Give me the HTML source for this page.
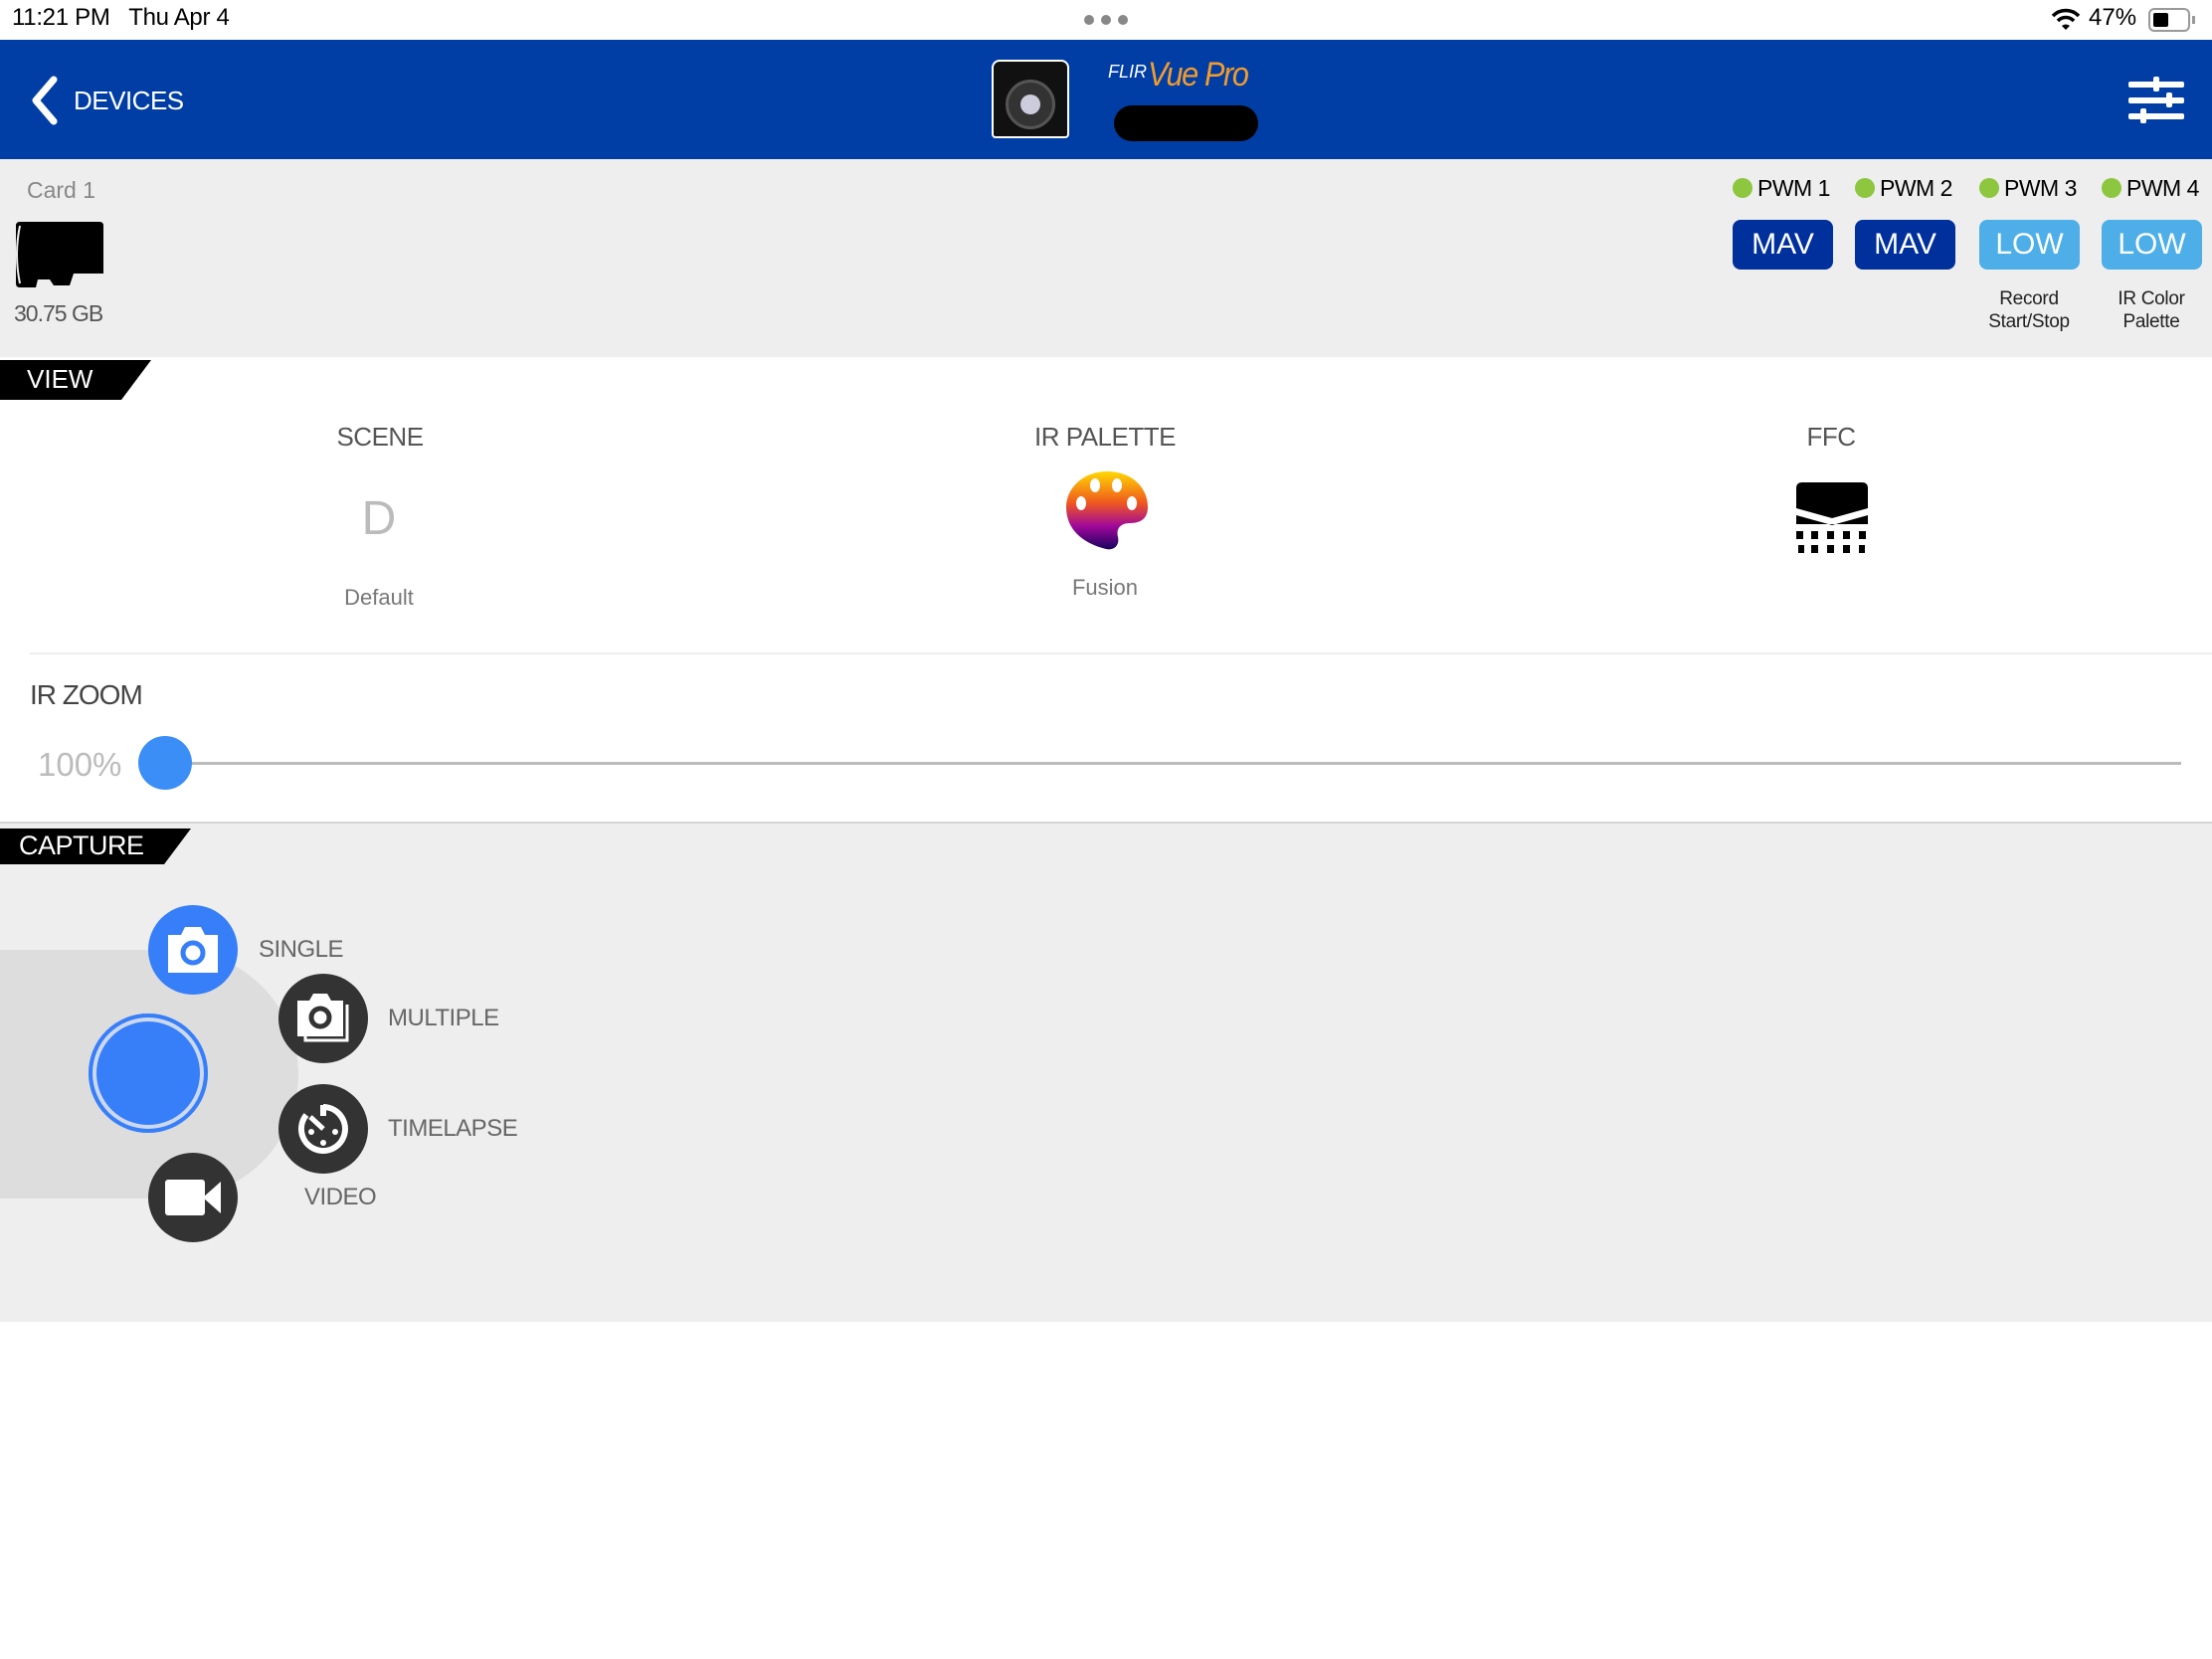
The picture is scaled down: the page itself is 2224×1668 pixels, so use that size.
<!DOCTYPE html>
<html><head><meta charset="utf-8"><style>
*{margin:0;padding:0;box-sizing:border-box}
body{width:2224px;height:1668px;background:#fff;font-family:"Liberation Sans",sans-serif;position:relative;overflow:hidden}
.a{position:absolute}
.c{transform:translateX(-50%);white-space:nowrap}
.btn{position:absolute;top:221px;width:101px;height:50px;border-radius:8px;color:#fff;font-size:30px;text-align:center;line-height:50px}
.pwm{position:absolute;top:176px;font-size:23px;color:#000;letter-spacing:-0.5px}
.pwm i{display:inline-block;width:20px;height:20px;border-radius:50%;background:#8dc63f;margin-right:5px;vertical-align:-2px}
.circ{position:absolute;width:90px;height:90px;border-radius:50%;background:#333;display:flex;align-items:center;justify-content:center}
.lbl{position:absolute;font-size:24px;color:#666;transform:translateY(-50%);letter-spacing:-0.5px}
</style></head><body>
<div class="a" style="left:12px;top:4px;font-size:24px;color:#000;letter-spacing:-0.3px">11:21 PM&nbsp;&nbsp; Thu Apr 4</div>
<div class="a" style="left:1090px;top:15px;width:44px;height:12px;display:flex;justify-content:space-between"><i style="width:10px;height:10px;border-radius:50%;background:#888"></i><i style="width:10px;height:10px;border-radius:50%;background:#888"></i><i style="width:10px;height:10px;border-radius:50%;background:#888"></i></div>
<svg class="a" style="left:2062px;top:7px" width="30" height="24" viewBox="0 0 30 24"><path d="M2 9 A18 18 0 0 1 28 9" stroke="#000" stroke-width="3.5" fill="none"/><path d="M7 14 A11 11 0 0 1 23 14" stroke="#000" stroke-width="3.5" fill="none"/><path d="M11 19 L15 23 L19 19 A6 6 0 0 0 11 19Z" fill="#000"/></svg>
<div class="a" style="left:2100px;top:4px;font-size:24px">47%</div>
<div class="a" style="left:2160px;top:8px;width:42px;height:24px;border:2px solid #999;border-radius:6px"><div style="margin:3px;width:15px;height:14px;background:#000;border-radius:2px"></div></div>
<div class="a" style="left:2204px;top:16px;width:3px;height:8px;background:#999"></div>
<div class="a" style="left:0;top:40px;width:2224px;height:120px;background:#003ea5"></div>
<svg class="a" style="left:28px;top:76px" width="32" height="50" viewBox="0 0 32 50"><path d="M26 4 L8 25 L26 46" stroke="#fff" stroke-width="7" fill="none" stroke-linejoin="round" stroke-linecap="round"/></svg>
<div class="a" style="left:74px;top:86px;font-size:26px;color:#fff;letter-spacing:-0.5px">DEVICES</div>
<div class="a" style="left:997px;top:60px;width:78px;height:79px;background:#111;border:2px solid #fff;border-radius:8px 8px 4px 4px"></div>
<div class="a" style="left:1011px;top:80px;width:50px;height:50px;border-radius:50%;background:#333;border:3px solid #555"></div>
<div class="a" style="left:1026px;top:95px;width:20px;height:20px;border-radius:50%;background:#ccd"></div>
<div class="a" style="left:1114px;top:62px;font-size:18px;color:#fff;font-style:italic">FLIR</div>
<div class="a" style="left:1154px;top:56px;font-size:34px;color:#f39c2c;font-style:italic;letter-spacing:-1.5px;transform:scaleX(0.9);transform-origin:left">Vue Pro</div>
<div class="a" style="left:1120px;top:106px;width:145px;height:36px;background:#000;border-radius:18px"></div>
<svg class="a" style="left:2140px;top:76px" width="56" height="50" viewBox="0 0 56 50"><rect x="0" y="6" width="56" height="6" rx="2" fill="#fff"/><rect x="0" y="22" width="56" height="6" rx="2" fill="#fff"/><rect x="0" y="38" width="56" height="6" rx="2" fill="#fff"/><rect x="25" y="1" width="6" height="15" rx="2" fill="#fff"/><rect x="38" y="17" width="6" height="15" rx="2" fill="#fff"/><rect x="12" y="33" width="6" height="15" rx="2" fill="#fff"/></svg>
<div class="a" style="left:0;top:160px;width:2224px;height:199px;background:#eee"></div>
<div class="a" style="left:27px;top:178px;font-size:23px;color:#888">Card 1</div>
<svg class="a" style="left:14px;top:223px" width="90" height="66" viewBox="0 0 90 66"><path d="M6 0 H86 Q90 0 90 4 V52 H60 L56 64 H40 L36 58 H24 L22 66 H6 Q2 66 2 62 V4 Q2 0 6 0Z" fill="#000"/><path d="M6 4 Q0 33 6 62" stroke="#eee" stroke-width="2" fill="none"/></svg>
<div class="a" style="left:14px;top:302px;font-size:23px;color:#555;letter-spacing:-1px">30.75 GB</div>
<div class="pwm" style="left:1742px"><i></i>PWM 1</div>
<div class="pwm" style="left:1865px"><i></i>PWM 2</div>
<div class="pwm" style="left:1990px"><i></i>PWM 3</div>
<div class="pwm" style="left:2113px"><i></i>PWM 4</div>
<div class="btn" style="left:1742px;background:#00309b">MAV</div>
<div class="btn" style="left:1865px;background:#00309b">MAV</div>
<div class="btn" style="left:1990px;background:#4eaee8">LOW</div>
<div class="btn" style="left:2113px;background:#4eaee8">LOW</div>
<div class="a c" style="left:2040px;top:289px;font-size:19px;text-align:center;line-height:23px;color:#222;letter-spacing:-0.3px">Record<br>Start/Stop</div>
<div class="a c" style="left:2163px;top:289px;font-size:19px;text-align:center;line-height:23px;color:#222;letter-spacing:-0.3px">IR Color<br>Palette</div>
<svg class="a" style="left:0;top:362px" width="152" height="40"><path d="M0 0 H152 L122 40 H0Z" fill="#000"/></svg>
<div class="a" style="left:27px;top:366px;font-size:26px;color:#fff">VIEW</div>
<div class="a c" style="left:382px;top:424px;font-size:26px;color:#555;letter-spacing:-0.5px">SCENE</div>
<div class="a c" style="left:1111px;top:424px;font-size:26px;color:#555;letter-spacing:-0.5px">IR PALETTE</div>
<div class="a c" style="left:1841px;top:424px;font-size:26px;color:#555;letter-spacing:-0.5px">FFC</div>
<div class="a c" style="left:381px;top:494px;font-size:48px;color:#bbb">D</div>
<div class="a c" style="left:381px;top:588px;font-size:22px;color:#777">Default</div>
<div class="a c" style="left:1111px;top:578px;font-size:22px;color:#777">Fusion</div>
<svg class="a" style="left:1072px;top:472px" width="82" height="82" viewBox="0 0 82 82"><defs><linearGradient id="g" x1="0" y1="0" x2="0" y2="1"><stop offset="0" stop-color="#ffd800"/><stop offset=".4" stop-color="#f0591e"/><stop offset=".7" stop-color="#a0089a"/><stop offset="1" stop-color="#1a0060"/></linearGradient></defs><path d="M41 2 C66 2 82 18 82 38 C82 50 74 54 64 54 C54 54 50 60 52 68 C54 76 48 82 40 80 C16 74 0 60 0 38 C0 18 18 2 41 2Z" fill="url(#g)"/><ellipse cx="29" cy="16" rx="5" ry="7" fill="#fff"/><ellipse cx="51" cy="16" rx="5" ry="7" fill="#fff"/><ellipse cx="15" cy="34" rx="5" ry="7" fill="#fff"/><ellipse cx="66" cy="34" rx="5" ry="7" fill="#fff"/></svg>
<svg class="a" style="left:1806px;top:485px" width="72" height="72" viewBox="0 0 72 72"><path d="M6 0 H66 Q72 0 72 6 V26 L36 36 L0 26 V6 Q0 0 6 0Z" fill="#000"/><path d="M0 33 L36 43 L72 33 V42 H0Z" fill="#000"/><g fill="#000"><rect x="0" y="49" width="7" height="8"/><rect x="15" y="49" width="7" height="8"/><rect x="31" y="49" width="7" height="8"/><rect x="47" y="49" width="7" height="8"/><rect x="63" y="49" width="7" height="8"/><rect x="2" y="63" width="6" height="8"/><rect x="15" y="63" width="7" height="8"/><rect x="31" y="63" width="7" height="8"/><rect x="47" y="63" width="7" height="8"/><rect x="63" y="63" width="6" height="8"/></g></svg>
<div class="a" style="left:30px;top:656px;width:2194px;height:2px;background:#eee"></div>
<div class="a" style="left:30px;top:683px;font-size:28px;color:#444;letter-spacing:-1px">IR ZOOM</div>
<div class="a" style="left:38px;top:750px;font-size:33px;color:#bbb">100%</div>
<div class="a" style="left:166px;top:766px;width:2027px;height:3px;background:#bbb"></div>
<div class="a" style="left:139px;top:740px;width:54px;height:54px;border-radius:50%;background:#3a8ef6"></div>
<div class="a" style="left:0;top:826px;width:2224px;height:503px;background:#eee;border-top:2px solid #d6d6d6"></div>
<svg class="a" style="left:0;top:833px" width="192" height="36"><path d="M0 0 H192 L165 36 H0Z" fill="#000"/></svg>
<div class="a" style="left:19px;top:835px;font-size:27px;color:#fff;letter-spacing:-0.5px">CAPTURE</div>
<div class="a" style="left:0;top:955px;width:300px;height:250px;background:#ddd;border-radius:0 125px 125px 0"></div>
<div class="a" style="left:89px;top:1019px;width:120px;height:120px;border-radius:50%;background:#377ef9;box-shadow:inset 0 0 0 4px #377ef9,inset 0 0 0 8px #ccd8ee"></div>
<div class="circ" style="left:149px;top:910px;background:#377ef9"><svg width="56" height="50" viewBox="0 0 56 50"><path d="M3 10 H16 L20 2 H36 L40 10 H53 V48 H3Z" fill="#fff"/><circle cx="28" cy="28" r="10" fill="none" stroke="#377ef9" stroke-width="5"/></svg></div>
<div class="circ" style="left:280px;top:979px"><svg width="56" height="56" viewBox="0 0 56 56"><path d="M10 14 V50 H52 V14" fill="none" stroke="#fff" stroke-width="3"/><path d="M2 10 H14 L18 3 H32 L36 10 H48 V46 H2Z" fill="#fff"/><circle cx="25" cy="27" r="9" fill="none" stroke="#333" stroke-width="5"/></svg></div>
<div class="circ" style="left:280px;top:1090px"><svg width="54" height="54" viewBox="0 0 54 54"><path d="M27 5 A22 22 0 1 1 10 13" fill="none" stroke="#fff" stroke-width="6"/><path d="M27 3 V14" stroke="#fff" stroke-width="6"/><path d="M14 15 L27 27" stroke="#fff" stroke-width="5"/><circle cx="15" cy="30" r="3" fill="#fff"/><circle cx="39" cy="30" r="3" fill="#fff"/><circle cx="27" cy="41" r="3" fill="#fff"/></svg></div>
<div class="circ" style="left:149px;top:1159px"><svg width="56" height="40" viewBox="0 0 56 40"><rect x="0" y="2" width="40" height="36" rx="3" fill="#fff"/><path d="M38 20 L56 4 V36Z" fill="#fff"/></svg></div>
<div class="lbl" style="left:260px;top:955px">SINGLE</div>
<div class="lbl" style="left:390px;top:1024px">MULTIPLE</div>
<div class="lbl" style="left:390px;top:1135px">TIMELAPSE</div>
<div class="lbl" style="left:306px;top:1204px">VIDEO</div>
</body></html>
